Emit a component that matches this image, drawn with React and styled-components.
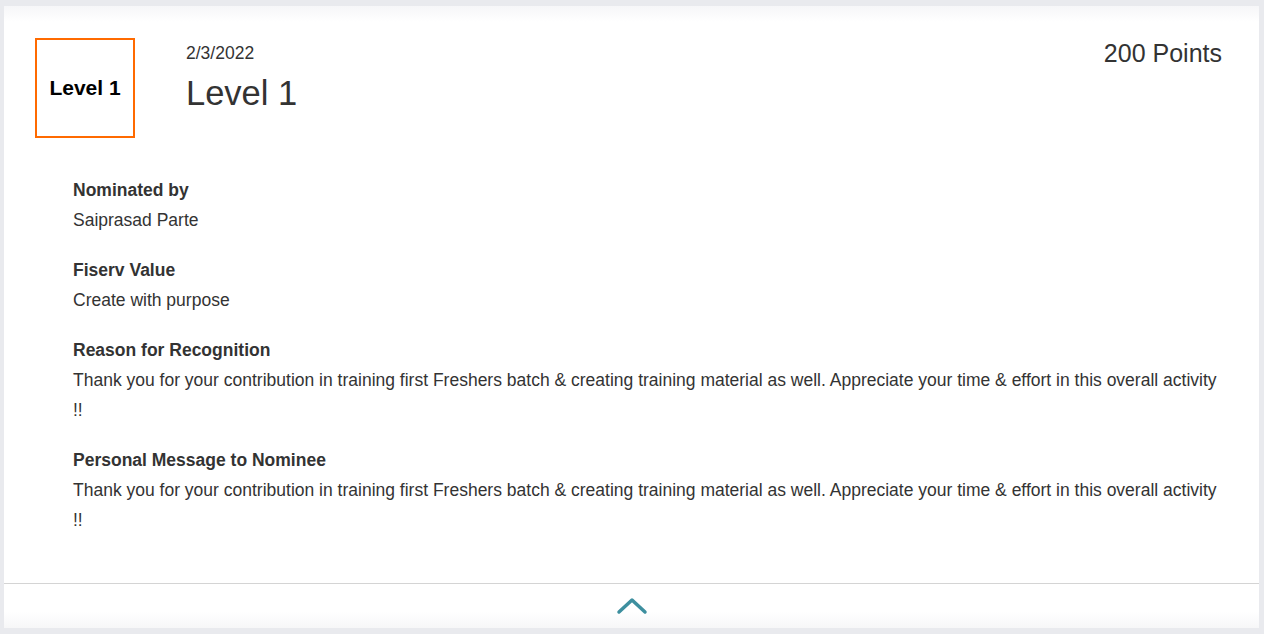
import React from 'react';
import styled, { createGlobalStyle } from 'styled-components';

const GlobalStyle = createGlobalStyle`
  html, body {
    margin: 0;
    padding: 0;
    background: #e9eaee;
    font-family: "Liberation Sans", Arial, sans-serif;
    color: #333;
  }
`;

const Page = styled.div`
  padding: 6px 5px 6px 4px;
`;

const Card = styled.div`
  background: linear-gradient(to bottom, #f6f6f8 0px, #ffffff 16px, #ffffff calc(100% - 16px), #f7f7f8 100%);
`;

const Body = styled.div`
  padding: 32px 37px 0 31px;
`;

const Header = styled.div`
  display: flex;
  align-items: flex-start;
`;

const Badge = styled.div`
  width: 100px;
  height: 100px;
  box-sizing: border-box;
  border: 2px solid #ff6a00;
  display: flex;
  align-items: center;
  justify-content: center;
  font-size: 21px;
  font-weight: bold;
  color: #000;
  flex-shrink: 0;
`;

const Titles = styled.div`
  margin-left: 51px;
  padding-top: 3px;
  flex: 1;
`;

const DateText = styled.div`
  font-size: 17.5px;
  line-height: 24px;
`;

const Title = styled.div`
  font-size: 34.5px;
  line-height: 40px;
  margin-top: 8px;
`;

const Points = styled.div`
  font-size: 25px;
  line-height: 30px;
`;

const Fields = styled.div`
  padding: 37px 0 28px 38px;
`;

const Field = styled.div`
  margin-bottom: 20px;
`;

const Label = styled.div`
  font-size: 17.5px;
  line-height: 30px;
  font-weight: bold;
`;

const Value = styled.div`
  font-size: 17.5px;
  line-height: 30px;
`;

const Footer = styled.div`
  border-top: 1px solid #d4d4d4;
  height: 44px;
  display: flex;
  align-items: center;
  justify-content: center;
`;

const Toggle = styled.button`
  background: none;
  border: none;
  padding: 0;
  cursor: pointer;
  display: flex;
`;

const message =
  'Thank you for your contribution in training first Freshers batch & creating training material as well. Appreciate your time & effort in this overall activity !!';

const fields = [
  { label: 'Nominated by', value: 'Saiprasad Parte' },
  { label: 'Fiserv Value', value: 'Create with purpose' },
  { label: 'Reason for Recognition', value: message },
  { label: 'Personal Message to Nominee', value: message },
];

export default function App() {
  return (
    <>
      <GlobalStyle />
      <Page>
        <Card>
          <Body>
            <Header>
              <Badge>Level 1</Badge>
              <Titles>
                <DateText>2/3/2022</DateText>
                <Title>Level 1</Title>
              </Titles>
              <Points>200 Points</Points>
            </Header>
            <Fields>
              {fields.map((f) => (
                <Field key={f.label}>
                  <Label>{f.label}</Label>
                  <Value>{f.value}</Value>
                </Field>
              ))}
            </Fields>
          </Body>
          <Footer>
            <Toggle aria-label="Collapse">
              <svg width="32" height="18" viewBox="0 0 32 18">
                <polyline
                  points="3,15 16,3 29,15"
                  fill="none"
                  stroke="#3d8f9f"
                  strokeWidth="3.5"
                  strokeLinecap="round"
                  strokeLinejoin="round"
                />
              </svg>
            </Toggle>
          </Footer>
        </Card>
      </Page>
    </>
  );
}
